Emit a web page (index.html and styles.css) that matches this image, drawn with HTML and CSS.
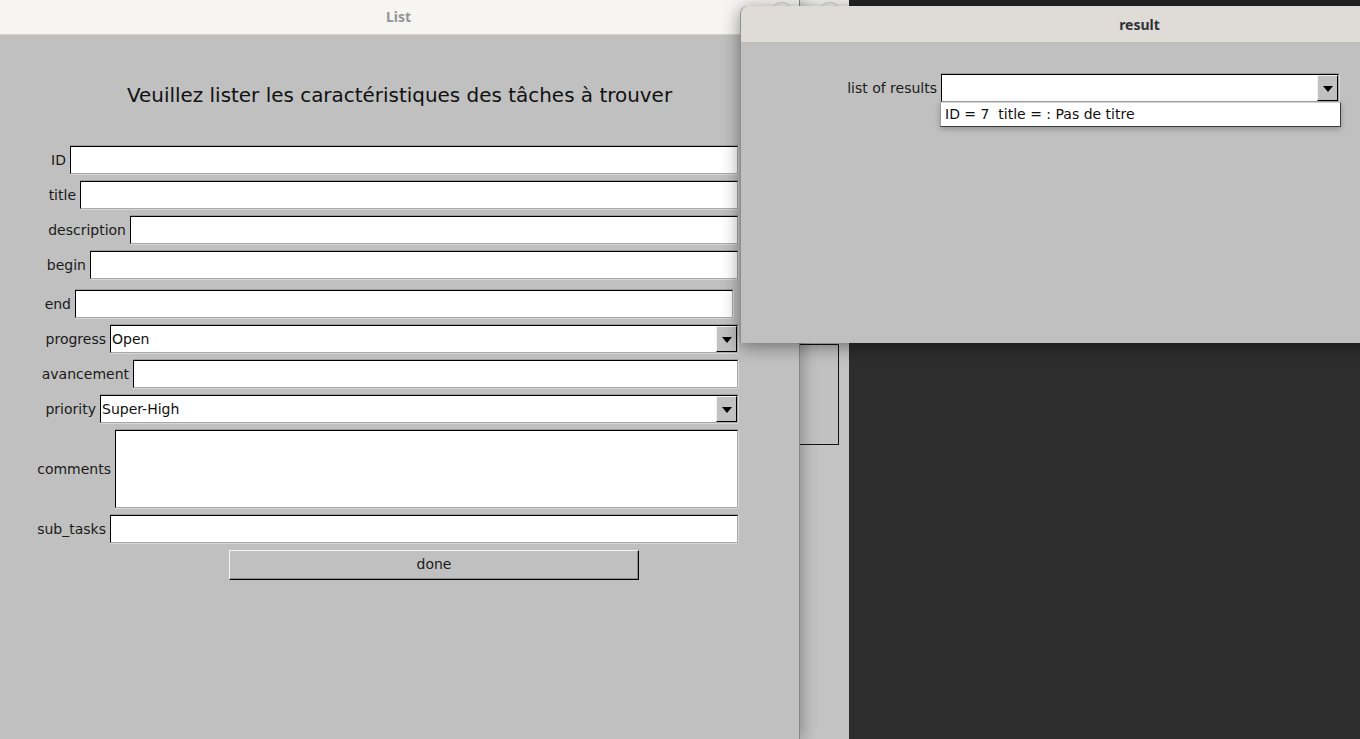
FILE: index.html
```html
<!DOCTYPE html>
<html lang="fr">
<head>
<meta charset="utf-8">
<title>List</title>
<link rel="stylesheet" href="styles.css">
</head>
<body>
<div class="desktop">
  <div class="win win-back">
    <div class="back-titlebar"><span class="wbtn wbtn-back"></span></div>
    <div class="back-body"><div class="back-box"></div></div>
  </div>

  <div class="win win-list">
    <div class="titlebar titlebar-list"><span class="title title-dim">List</span><span class="wbtn wbtn-list"></span></div>
    <div class="tk-body">
      <h1 class="heading">Veuillez lister les caractéristiques des tâches à trouver</h1>
      <div class="form">
        <div class="row"><span class="lbl w-id">ID</span><div class="entry"></div></div>
        <div class="row"><span class="lbl w-title">title</span><div class="entry"></div></div>
        <div class="row"><span class="lbl w-desc">description</span><div class="entry"></div></div>
        <div class="row"><span class="lbl w-begin">begin</span><div class="entry"></div></div>
        <div class="row row-end"><span class="lbl w-end">end</span><div class="entry entry-short"></div></div>
        <div class="row"><span class="lbl w-progress">progress</span><div class="combo"><span class="combo-text">Open</span><span class="combo-btn"><i class="tri"></i></span></div></div>
        <div class="row"><span class="lbl w-avan">avancement</span><div class="entry"></div></div>
        <div class="row"><span class="lbl w-prio">priority</span><div class="combo"><span class="combo-text">Super-High</span><span class="combo-btn"><i class="tri"></i></span></div></div>
        <div class="row row-text"><span class="lbl w-comm">comments</span><div class="entry textarea"></div></div>
        <div class="row"><span class="lbl w-sub">sub_tasks</span><div class="entry"></div></div>
        <div class="btn-row"><button class="btn-done">done</button></div>
      </div>
    </div>
  </div>

  <div class="win win-result">
    <div class="titlebar titlebar-result"><span class="title title-strong">result</span></div>
    <div class="tk-body result-body">
      <div class="row result-row"><span class="lbl w-results">list of results</span><div class="combo combo-result"><span class="combo-text"></span><span class="combo-btn"><i class="tri"></i></span></div></div>
    </div>
    <div class="popup"><span class="popup-item">ID = 7&nbsp; title = : Pas de titre</span></div>
  </div>
</div>
</body>
</html>
```

FILE: styles.css
```css
* { box-sizing: border-box; }
html, body { margin: 0; padding: 0; }
body {
  width: 1360px;
  height: 739px;
  overflow: hidden;
  background: #2d2d2d;
  font-family: "DejaVu Sans", sans-serif;
  font-size: 14px;
  color: #1c1c1c;
}
.desktop {
  position: relative;
  width: 1360px;
  height: 739px;
  overflow: hidden;
  background: linear-gradient(#242424 0, #242424 6px, #2d2d2d 6px);
}
.win { position: absolute; }

/* window behind */
.win-back {
  left: 700px;
  top: -40px;
  width: 149px;
  height: 800px;
  background: #c3c3c3;
}
.back-titlebar {
  position: relative;
  height: 46px;
  background: #f6f5f4;
}
.back-body { padding: 338px 0 0 99px; }
.back-box {
  width: 40px;
  height: 101px;
  border: 1px solid #111;
  border-left-color: #8a8a8a;
  background: #c1c1c1;
}
.wbtn {
  position: absolute;
  width: 24px;
  height: 24px;
  border-radius: 50%;
  border: 1px solid #c9c7c4;
}
.wbtn-back { left: 118px; top: 42px; }
.wbtn-list { left: 770px; top: 2px; }

/* List window */
.win-list {
  left: 0;
  top: 0;
  width: 800px;
  height: 739px;
  background: #c0c0c0;
  border-right: 1px solid #858585;
  box-shadow: 3px 0 14px rgba(0, 0, 0, 0.28);
}
.titlebar {
  position: relative;
  display: flex;
  align-items: center;
  justify-content: center;
  font-family: "Noto Sans", "Open Sans", sans-serif;
  font-weight: 700;
  font-size: 14px;
}
.titlebar-list {
  height: 35px;
  background: #f6f5f4;
  border-bottom: 1px solid #d6d1cc;
  padding-right: 2px;
  padding-bottom: 2px;
}
.title-dim { color: #929595; }
.tk-body { background: #c0c0c0; }
.heading {
  margin: 48px 0 0;
  font-weight: 400;
  font-size: 19.95px;
  line-height: 24px;
  text-align: center;
  color: #111;
}
.form {
  width: 738px;
  padding-top: 32px;
}
.row {
  display: flex;
  align-items: center;
  height: 28px;
  margin-top: 7px;
}
.row-end { margin-top: 11px; }
.row-text { height: 78px; }
.lbl {
  flex: none;
  text-align: right;
  padding-right: 4px;
  padding-bottom: 1px;
  white-space: nowrap;
  color: #1a1a1a;
}
.w-id { width: 70px; }
.w-title { width: 80px; }
.w-desc { width: 130px; }
.w-begin { width: 90px; }
.w-end { width: 75px; }
.w-progress { width: 110px; }
.w-avan { width: 133px; }
.w-prio { width: 100px; }
.w-comm { width: 115px; }
.w-sub { width: 110px; }
.w-results { width: 201px; }

.entry, .combo {
  flex: 1;
  height: 28px;
  background: #fff;
  border: 1px solid;
  border-color: #000 #a9a9a9 #a9a9a9 #000;
  box-shadow: 0 1px 0 #d6d6d6, 1px 0 0 #d6d6d6, 0 -1px 0 #9c9c9c;
}
.entry-short { margin-right: 5px; }
.textarea { height: 78px; }
.combo {
  display: flex;
  align-items: stretch;
}
.combo-text {
  flex: 1;
  padding-left: 1px;
  line-height: 26px;
  color: #111;
}
.combo-btn {
  width: 21px;
  display: flex;
  align-items: center;
  justify-content: center;
  background: #c2c2c2;
  border: 1px solid;
  border-color: #f2f2f2 #000 #000 #f2f2f2;
}
.tri {
  display: block;
  width: 0;
  height: 0;
  border-left: 5px solid transparent;
  border-right: 5px solid transparent;
  border-top: 6px solid #000;
  margin-top: 1px;
}
.btn-row {
  margin-top: 7px;
  padding-left: 229px;
}
.btn-done {
  display: block;
  width: 410px;
  height: 30px;
  margin: 0;
  padding: 0 0 2px;
  font-family: "DejaVu Sans", sans-serif;
  font-size: 14px;
  color: #1a1a1a;
  background: #c0c0c0;
  border: 1px solid;
  border-color: #f4f4f4 #000 #000 #f4f4f4;
  box-shadow: inset -1px -1px 0 #8e8e8e;
}

/* result window */
.win-result {
  left: 740px;
  top: 6px;
  width: 798px;
  height: 337px;
  background: #c0c0c0;
  border-radius: 8px 8px 0 0;
  border-left: 1px solid #8f8f8f;
  box-shadow: 0 3px 18px rgba(0, 0, 0, 0.45);
}
.titlebar-result {
  height: 37px;
  background: #dfdbd7;
  border-bottom: 1px solid #c1bab3;
  border-radius: 8px 8px 0 0;
}
.title-strong { color: #2e3436; }
.result-body { padding-top: 24px; }
.result-row .lbl { width: 200px; }
.combo-result {
  flex: none;
  width: 398px;
  height: 28px;
}
.popup {
  position: absolute;
  left: 199px;
  top: 96px;
  width: 401px;
  height: 25px;
  background: #fff;
  border: 1px solid;
  border-color: #cfcfcf #3a3a3a #3a3a3a #9a9a9a;
  box-shadow: 0 2px 6px rgba(0, 0, 0, 0.25);
  display: flex;
  align-items: center;
  padding-left: 4px;
  padding-bottom: 2px;
}
.popup-item { color: #111; white-space: pre; }
```
